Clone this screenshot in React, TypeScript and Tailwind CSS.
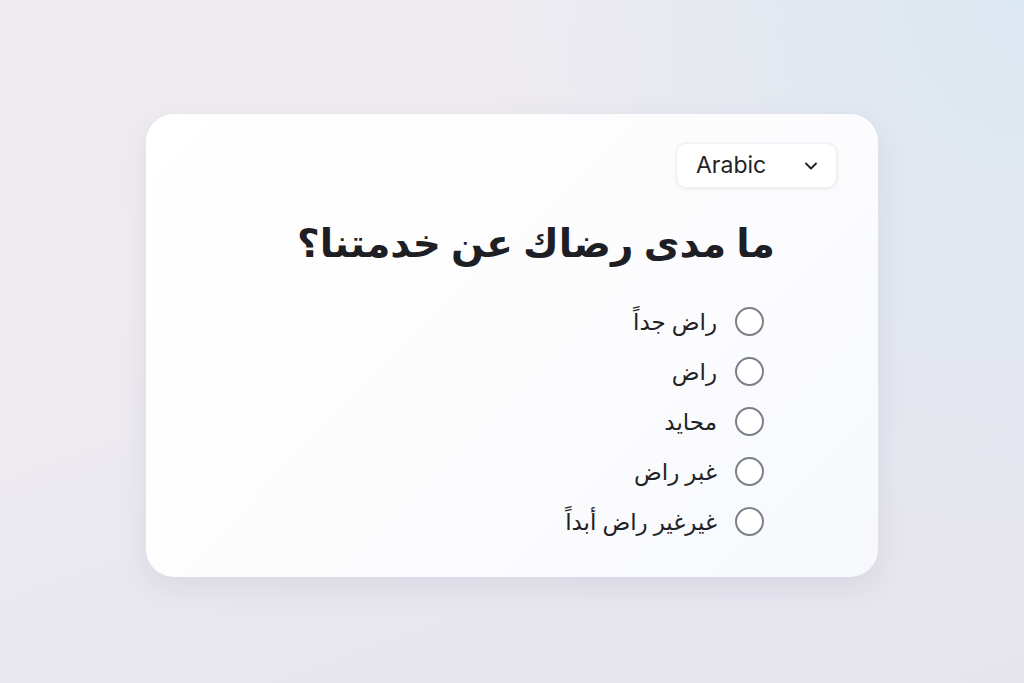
import { ChevronDown } from 'lucide-react';

const options = ['راض جداً', 'راض', 'محايد', 'غبر راض', 'غيرغير راض أبداً'];

export default function App() {
  return (
    <div className="w-[1024px] h-[683px] flex items-center justify-center bg-[linear-gradient(160deg,#eeecf1_0%,#efebf0_35%,#e9e8f0_60%,#e6e5ee_100%)] relative overflow-hidden font-['Noto_Sans','DejaVu_Sans',sans-serif]">
      <div className="absolute inset-0 bg-[radial-gradient(circle_at_100%_0%,#dbe7f1_0%,rgba(219,231,241,0)_45%)]" />
      <div className="relative w-[732px] h-[463px] mt-[8px] rounded-[28px] bg-[linear-gradient(135deg,#ffffff_0%,#fcfcfe_60%,#f6f8fc_100%)] shadow-[0_10px_30px_rgba(80,80,120,0.10)] flex flex-col pt-[29px] pr-[41px]">
        <div className="flex justify-end">
          <button className="w-[161px] h-[45px] rounded-[10px] bg-white shadow-[0_1px_4px_rgba(0,0,0,0.08)] border border-[#eef0f3] flex items-center justify-between pl-[19px] pr-[15px] text-[23px] text-[#1f2328] font-['Inter',sans-serif]">
            <span>Arabic</span>
            <ChevronDown className="w-[20px] h-[20px] text-[#222]" strokeWidth={2.25} />
          </button>
        </div>
        <div dir="rtl" className="pr-[62px] mt-[26px] flex flex-col">
          <h1 className="text-[39px] leading-[56px] font-bold text-[#1d1f24]">ما مدى رضاك عن خدمتنا؟</h1>
          <ul className="mt-[37px] flex flex-col gap-[22px] pr-[11px]">
            {options.map((o) => (
              <li key={o} className="flex items-center gap-[18px] h-[28px]">
                <span className="w-[29px] h-[29px] rounded-full border-[2.5px] border-[#7b7f87] bg-white shrink-0" />
                <span className="text-[23px] text-[#1f2226]">{o}</span>
              </li>
            ))}
          </ul>
        </div>
      </div>
    </div>
  );
}
